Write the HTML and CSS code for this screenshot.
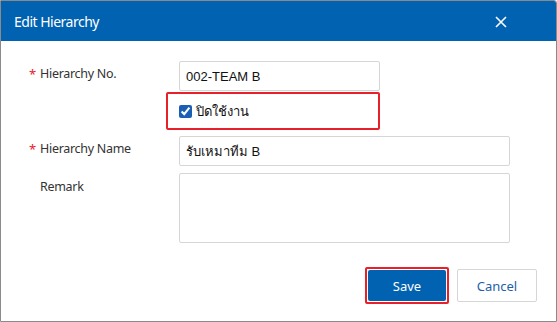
FILE: index.html
```html
<!DOCTYPE html>
<html lang="th">
<head>
    <meta charset="UTF-8">
    <title>Edit Hierarchy</title>
    <link rel="stylesheet" href="styles.css">
</head>
<body>
    <div class="modal">
        <div class="modal-header">
            <span class="modal-title">Edit Hierarchy</span>
            <button class="close-btn" type="button">
                <svg width="12" height="12" viewBox="0 0 12 12">
                    <path d="M1 1 L11 11 M11 1 L1 11" stroke="#fff" stroke-width="1.6" fill="none"/>
                </svg>
            </button>
        </div>
        <div class="modal-body">
            <div class="form-row row-no">
                <label class="form-label"><span class="req">*</span>Hierarchy No.</label>
                <input class="form-input short" type="text" value="002-TEAM B">
            </div>
            <div class="form-row row-check">
                <div class="highlight check-box">
                    <input type="checkbox" checked>
                    <span>ปิดใช้งาน</span>
                </div>
            </div>
            <div class="form-row row-name">
                <label class="form-label"><span class="req">*</span>Hierarchy Name</label>
                <input class="form-input" type="text" value="รับเหมาทีม B">
            </div>
            <div class="form-row row-remark">
                <label class="form-label">Remark</label>
                <textarea class="form-input remark"></textarea>
            </div>
        </div>
        <div class="modal-footer">
            <div class="highlight save-wrap">
                <button class="btn btn-primary" type="button">Save</button>
            </div>
            <button class="btn btn-default" type="button">Cancel</button>
        </div>
    </div>
</body>
</html>
```

FILE: styles.css
```css
/* Modal variables */
:root {
    --brand-blue: #0062b1;
    --border-gray: #d6d6d6;
    --text-dark: #333333;
    --alert-red: #e8202a;
}

html, body {
    margin: 0;
    padding: 0;
    background: #ffffff;
}

body {
    font-family: 'Noto Sans', 'Open Sans', sans-serif;
    color: var(--text-dark);
}

.modal {
    width: 555px;
    height: 320px;
    border: 1px solid #8a8a8a;
    border-top-right-radius: 3px;
    display: flex;
    flex-direction: column;
    background: #fff;
}

/* Header */
.modal-header {
    height: 40px;
    background-color: var(--brand-blue);
    display: flex;
    align-items: center;
    justify-content: space-between;
    padding: 0 12px 0 13px;
    border-top-right-radius: 2px;
}

.modal-title {
    color: #fff;
    font-size: 14px;
    letter-spacing: -0.5px;
}

.close-btn {
    background: none;
    border: 0;
    padding: 0;
    width: 20px;
    height: 20px;
    display: flex;
    align-items: center;
    justify-content: center;
    margin-right: 33px;
    margin-top: 1px;
}

/* Body */
.modal-body {
    padding: 20px 0 0 28px;
    flex: 1;
}

.form-row {
    display: flex;
    align-items: flex-start;
}

.form-label {
    box-sizing: border-box;
    width: 150px;
    font-size: 12.5px;
    letter-spacing: -0.3px;
    line-height: 18px;
    padding-top: 5px;
    color: var(--text-dark);
    padding-left: 11px;
    position: relative;
}

.req {
    position: absolute;
    left: 0;
    top: 4px;
    color: var(--alert-red);
    font-size: 13px;
}

.form-input {
    box-sizing: border-box;
    border: 1px solid var(--border-gray);
    border-radius: 2px;
    height: 30px;
    width: 331px;
    padding: 0 6px;
    font-family: 'Liberation Sans', 'Noto Sans', sans-serif;
    font-size: 13px;
    color: #111;
    outline: none;
    margin: 0;
}

.form-input.short {
    width: 201px;
}

.remark {
    height: 70px;
    resize: none;
}

.row-no .form-label { padding-top: 4px; }
.row-name .form-label { padding-top: 4px; }

.row-check {
    margin-top: 1px;
    padding-left: 137px;
}

.row-name {
    margin-top: 6px;
}

.row-remark {
    margin-top: 7px;
}

/* Red highlight frames */
.highlight {
    border: 2px solid var(--alert-red);
    border-radius: 2px;
}

.check-box {
    box-sizing: border-box;
    width: 214px;
    height: 38px;
    display: flex;
    align-items: center;
    padding-left: 11px;
    font-family: 'Liberation Sans', 'Noto Sans', sans-serif;
    font-size: 13px;
    color: #111;
}

.check-box input {
    width: 13px;
    height: 13px;
    margin: 0 4px 0 0;
    accent-color: #1a5fb4;
}

/* Footer */
.modal-footer {
    display: flex;
    justify-content: flex-end;
    align-items: center;
    gap: 8px;
    padding: 0 19px 17px 0;
}

.save-wrap {
    padding: 1px;
    display: flex;
}

.btn {
    font-family: 'Noto Sans', 'Open Sans', sans-serif;
    font-size: 13px;
    border-radius: 2px;
    cursor: pointer;
}

.btn-primary {
    width: 78px;
    height: 31px;
    border: 0;
    background: var(--brand-blue);
    color: #fff;
}

.btn-default {
    width: 80px;
    height: 33px;
    border: 1px solid var(--border-gray);
    background: #fff;
    color: #1e5fa8;
}
```
